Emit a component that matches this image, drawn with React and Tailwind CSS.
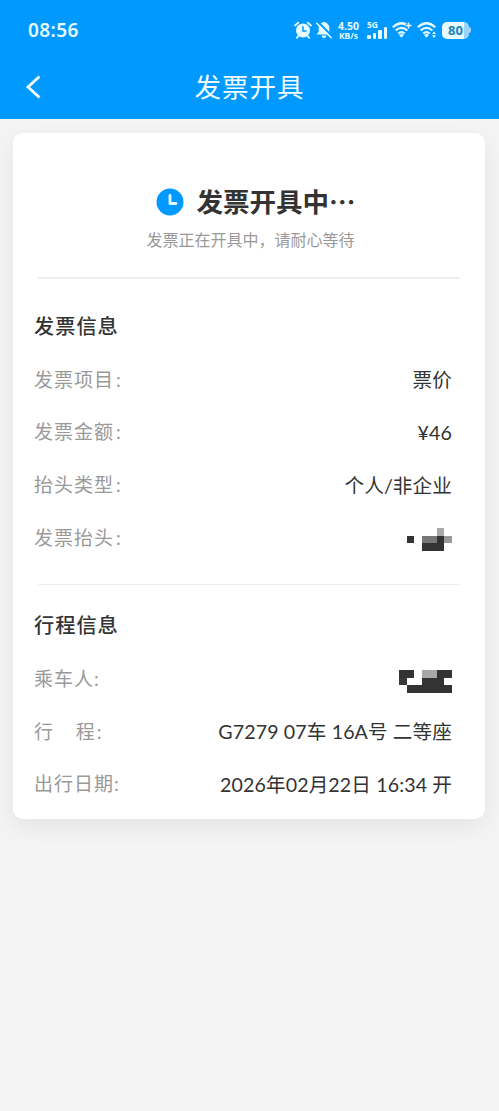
import React from 'react';

const invoiceRows = [
    { label: "发票项目", wide: true, value: "票价" },
    { label: "发票金额", wide: true, value: "¥46" },
    { label: "抬头类型", wide: true, value: "个人/非企业" },
    { label: "发票抬头", wide: true, mask: "title" },
];

const tripRows = [
    { label: "乘车人", mask: "passenger" },
    { label: "行\u3000程", spaced: true, value: "G7279 07车 16A号 二等座" },
    { label: "出行日期", value: "2026年02月22日 16:34 开" },
];

// [column, row, columns, fill] on a 7x3 grid of mosaic cells
const masks = {
    title: [
        [4, 0, 1, "#a8a8a8"],
        [0, 1, 1, "#333333"], [2, 1, 2, "#777777"], [4, 1, 1, "#333333"], [5, 1, 1, "#9a9a9a"],
        [2, 2, 3, "#333333"],
    ],
    passenger: [
        [-1, 0, 2, "#333333"], [2, 0, 2, "#a8a8a8"], [4, 0, 2, "#333333"],
        [-1, 1, 1, "#3a3a3a"], [2, 1, 3, "#333333"],
        [0, 2, 6, "#333333"],
    ],
};

const Mosaic = ({ name }) => (
    <svg width="53" height="23" viewBox="-1 0 7 3" preserveAspectRatio="none" shapeRendering="crispEdges" className="translate-y-[2px]">
        {masks[name].map(([x, y, w, fill]) => (
            <rect key={`${x}-${y}`} x={x} y={y} width={w} height="1" fill={fill} />
        ))}
    </svg>
);

const Wifi = ({ children }) => (
    <svg width="21" height="18" viewBox="0 0 21 18" fill="none" stroke="currentColor" strokeWidth="2.200">
        <path d="M.8 6.200Q9.500 -1.700 18.200 6.200M3.600 9.500Q9.500 4.200 15.400 9.500M6.300 12.500Q9.500 9.600 12.700 12.500" />
        <path d="M7 14Q9.500 12 12 14L9.500 16.800Z" fill="currentColor" stroke="none" />
        {children}
    </svg>
);

const StatusBar = () => (
    <div className="flex h-[60px] items-center justify-between pl-[28px] pr-[28px] text-[#e6fbff]">
        <span className="font-['Noto_Sans','Noto_Sans_CJK_SC',sans-serif] text-[19px] font-semibold tracking-[0.4px]">08:56</span>
        <div className="flex items-center">
            {/* Alarm */}
            <svg width="18" height="18" viewBox="0 0 18 18" fill="none" strokeLinecap="round">
                <circle cx="9" cy="9.500" r="7" fill="currentColor" />
                <path d="M1 4.500 4.200 1.700M17 4.500 13.800 1.700M4.200 15.200 2.800 16.800M13.800 15.200 15.200 16.800" stroke="currentColor" strokeWidth="1.800" />
                <path d="M9 5.800V10H12" stroke="#0099ff" strokeWidth="1.500" />
            </svg>
            {/* Muted bell */}
            <svg width="18" height="18" viewBox="0 0 18 18" className="ml-[3px]">
                <path d="M9 1C5.800 1.500 3.700 3.800 3.700 7v3.800L1.500 13.500h15L14.300 10.800V7C14.300 3.800 12.200 1.500 9 1ZM6.500 14.500h5Q11 17 9 17T6.500 14.500Z" fill="currentColor" />
                <path d="M2.500 .5 18 16" stroke="#0099ff" strokeWidth="2" />
                <path d="M1.200 1.800 16.500 17" stroke="currentColor" strokeWidth="1.500" />
            </svg>
            <div className="ml-[4px] w-[23px] text-center font-['Noto_Sans',sans-serif] font-bold">
                <p className="text-[10.500px] leading-[10px]">4.50</p>
                <p className="text-[8.500px] leading-[9px]">KB/s</p>
            </div>
            {/* 5G signal */}
            <div className="ml-[7px] flex w-[20px] flex-col">
                <span className="font-['Noto_Sans',sans-serif] text-[8.500px] font-bold leading-[8px]">5G</span>
                <div className="-mt-[3px] flex h-[13px] items-end gap-[2px]">
                    <i className="h-[4px] w-[3.500px] rounded-[1px] bg-current" />
                    <i className="h-[6px] w-[3.500px] rounded-[1px] bg-current" />
                    <i className="h-[9px] w-[3.500px] rounded-[1px] bg-current" />
                    <i className="h-[12px] w-[3.500px] rounded-[1px] bg-current" />
                </div>
            </div>
            <div className="ml-[5px] flex items-center gap-[4px]">
                <Wifi>
                    <path d="M16.500 1.500v6M13.500 4.500h6" stroke="#0099ff" strokeWidth="3.500" />
                    <path d="M16.500 1.500v6M13.500 4.500h6" strokeWidth="1.500" />
                </Wifi>
                <Wifi>
                    <path d="M17 10.500 19 13H15ZM17 17 19 14.300H15Z" fill="currentColor" stroke="none" />
                </Wifi>
            </div>
            {/* Battery */}
            <div className="ml-[4px] flex items-center">
                <div className="flex h-[17px] w-[27px] items-center justify-center rounded-[5px] bg-[linear-gradient(90deg,#e6fbff_81%,#9cd4fb_81%)] font-['Noto_Sans',sans-serif] text-[13px] font-bold leading-none text-[#2184ba]">
                    80
                </div>
                <i className="h-[6px] w-[2px] rounded-r-full bg-[#9cd4fb]" />
            </div>
        </div>
    </div>
);

const Section = ({ title, rows }) => (
    <section className="pl-[21px] pr-[33px]">
        <h2 className="text-[20.200px] font-medium leading-[26px] tracking-[1px] text-[#333]">{title}</h2>
        <div className="mt-[14.500px]">
            {rows.map((row) => (
                <div key={row.label} className="flex h-[52.700px] items-center justify-between whitespace-nowrap">
                    <span className={row.spaced ? "text-[19px] tracking-[1.900px] text-[#999]" : "text-[19px] tracking-[1px] text-[#999]"}>
                        {row.label}
                        <span className={row.wide ? "ml-[2px]" : ""}>:</span>
                    </span>
                    {row.mask ? <Mosaic name={row.mask} /> : <span className="text-[19.600px] tracking-[0.120px] text-[#333]">{row.value}</span>}
                </div>
            ))}
        </div>
    </section>
);

const App = () => (
    <div className="min-h-screen bg-[#f4f4f4] font-['Lato','Noto_Sans_CJK_SC',sans-serif]">
        <header className="h-[119px] bg-[#0099ff] text-[#f0fcff]">
            <StatusBar />
            <div className="grid h-[54px] grid-cols-[60px_1fr_60px] items-center">
                <button aria-label="返回" className="pl-[25px]">
                    <svg width="17" height="24" viewBox="0 0 17 24" fill="none" stroke="currentColor" strokeWidth="2.800">
                        <path d="M14.500 1.500 3 12 14.500 22.500" />
                    </svg>
                </button>
                <h1 className="text-center text-[26.500px] leading-none tracking-[1px]">发票开具</h1>
            </div>
        </header>

        <main className="px-[13px] pt-[14px]">
            <div className="mr-[1px] h-[686px] rounded-[10px] bg-white shadow-[0_8px_24px_rgba(0,0,0,0.07)]">
                {/* Invoice state */}
                <div className="mx-[25px] flex h-[146px] flex-col items-center border-b-2 border-[#eeeeee] pt-[49px]">
                    <div className="flex items-center gap-[13px] pl-[13px]">
                        <svg width="28" height="28" viewBox="0 0 28 28" fill="none" className="translate-y-[1px]">
                            <circle cx="14" cy="14" r="13.500" fill="#0099ff" />
                            <path d="M14 7.500V15.500H20" stroke="#e6fbff" strokeWidth="2.800" strokeLinecap="round" strokeLinejoin="round" />
                        </svg>
                        <p className="font-['Noto_Sans_CJK_SC',sans-serif] text-[26.500px] font-bold leading-[38px] text-[#333]">发票开具中⋯</p>
                    </div>
                    <p className="mt-[9px] pl-[3px] text-[16px] leading-[22px] text-[#999]">发票正在开具中，请耐心等待</p>
                </div>

                <div className="pt-[34px]">
                    <Section title="发票信息" rows={invoiceRows} />
                </div>
                <div className="mx-[25px] mt-[20px] border-t border-[#eeeeee]" />
                <div className="pt-[27px]">
                    <Section title="行程信息" rows={tripRows} />
                </div>
            </div>
        </main>
    </div>
);

export default App;
